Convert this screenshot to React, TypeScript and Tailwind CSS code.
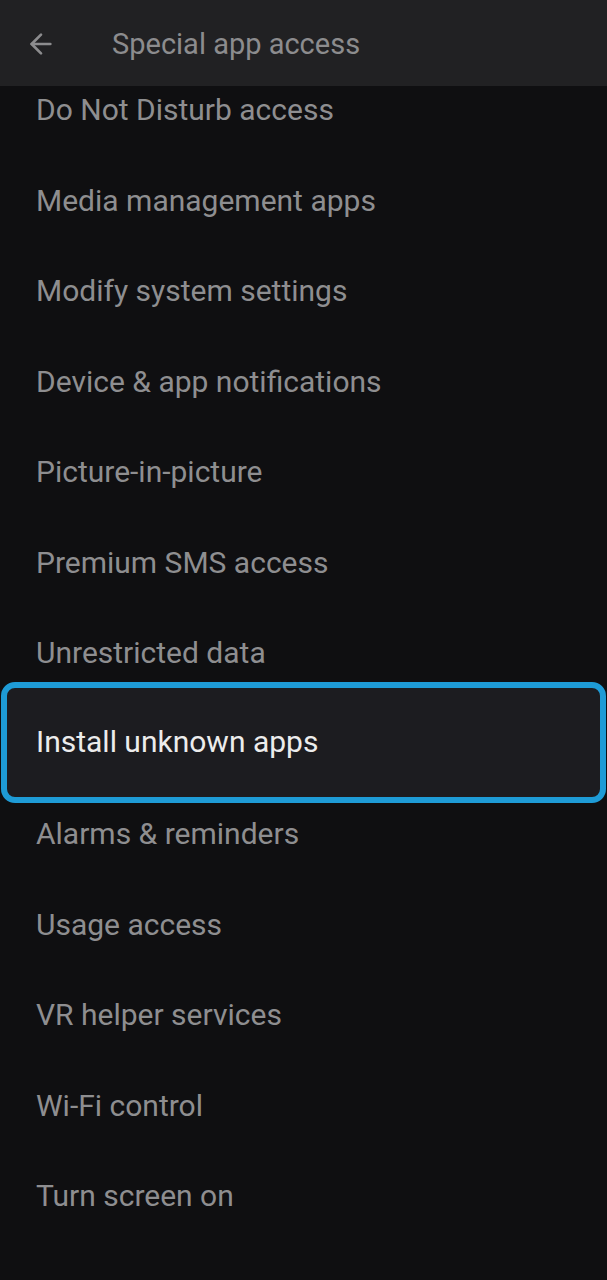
import { ArrowLeft } from "lucide-react";

const items = [
  "Do Not Disturb access",
  "Media management apps",
  "Modify system settings",
  "Device & app notifications",
  "Picture-in-picture",
  "Premium SMS access",
  "Unrestricted data",
  "Install unknown apps",
  "Alarms & reminders",
  "Usage access",
  "VR helper services",
  "Wi-Fi control",
  "Turn screen on",
];

const focused = "Install unknown apps";

export default function App() {
  return (
    <div
      className="flex h-[1280px] w-[607px] flex-col overflow-hidden bg-[#0f0f11]"
      style={{ fontFamily: "Roboto, 'Open Sans', sans-serif" }}
    >
      {/* toolbar */}
      <div className="z-10 flex h-[86px] shrink-0 items-center bg-[#212123] pl-[25px] pt-[2px]">
        <ArrowLeft className="h-[32px] w-[32px] text-[#8c8c8e]" strokeWidth={2} />
        <span className="ml-[55px] text-[29px] leading-none text-[#8c8c8e]">Special app access</span>
      </div>

      {/* list, scrolled a little */}
      <div className="flex-1 overflow-hidden">
        <div className="-mt-[21px] flex flex-col">
          {items.map((label) => (
            <div key={label} className="relative flex h-[90.5px] items-center pl-[36px]">
              {label === focused && (
                <div className="absolute -top-[17px] -bottom-[14px] left-[1px] right-[1px] rounded-[14px] border-[6px] border-[#1e9bd6] bg-[#1c1c20]" />
              )}
              <span
                className={
                  "relative text-[30px] leading-none " +
                  (label === focused ? "-mt-[3px] text-[#ececec]" : "text-[#8e8e90]")
                }
              >
                {label}
              </span>
            </div>
          ))}
        </div>
      </div>
    </div>
  );
}
